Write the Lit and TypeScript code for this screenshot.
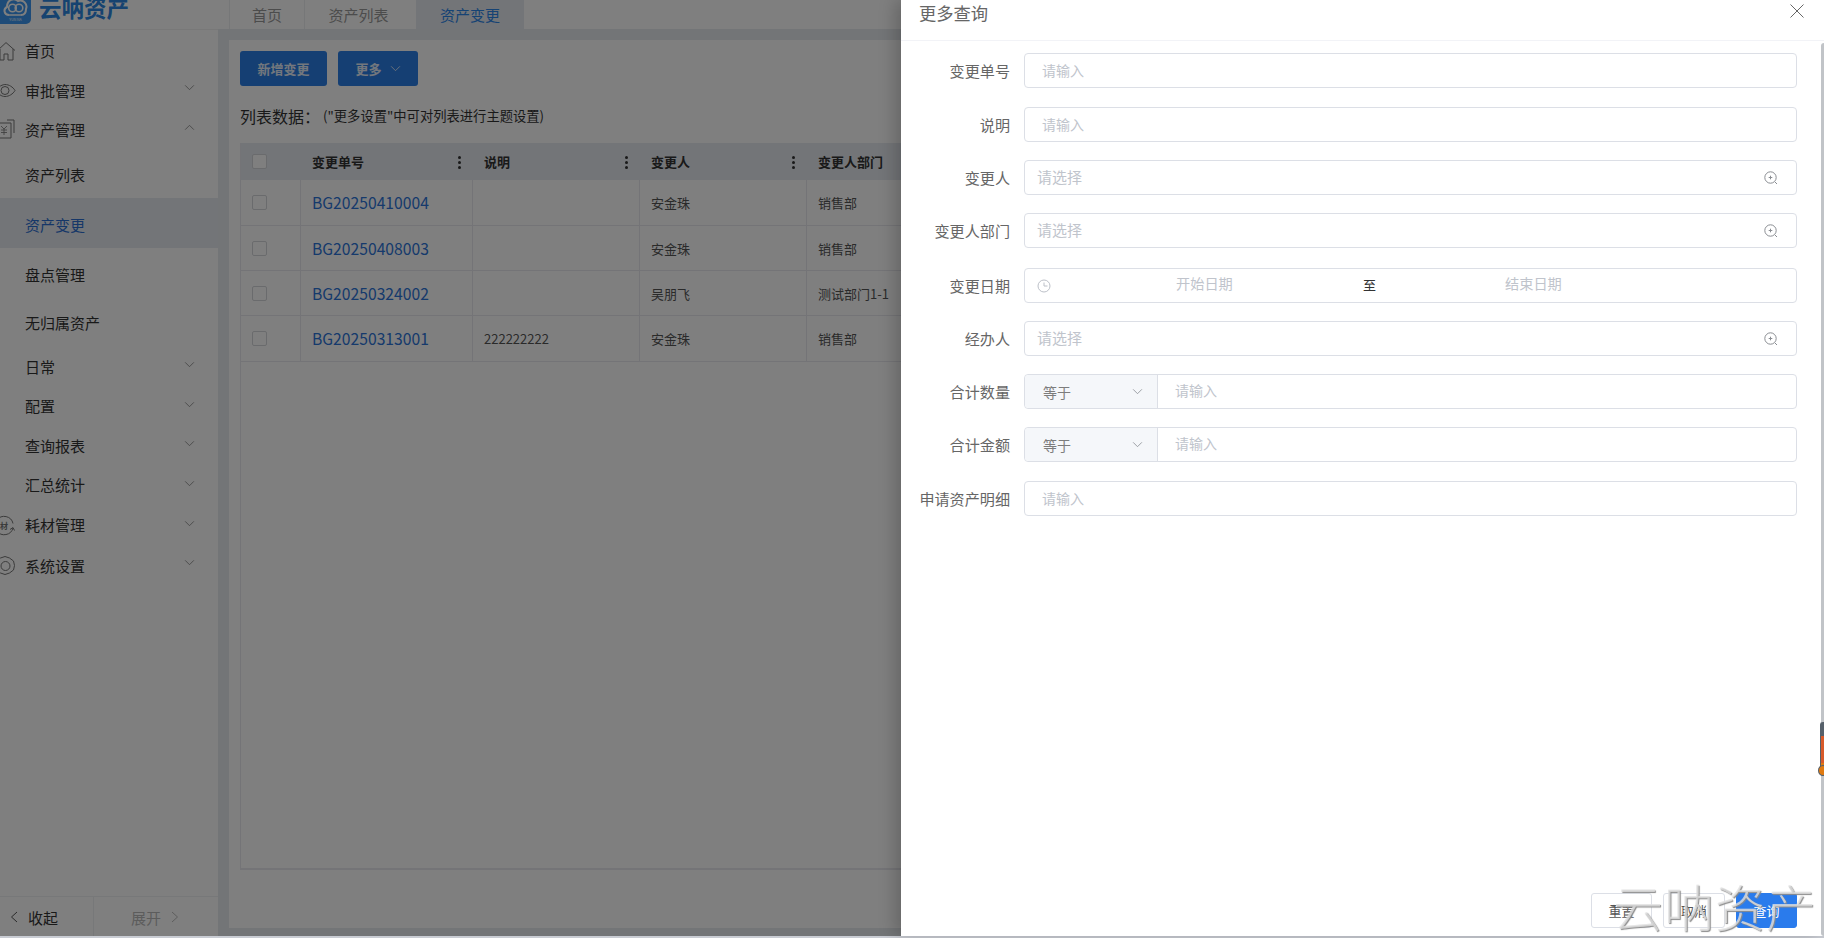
import { LitElement, html, css, svg } from "lit";
import { customElement } from "lit/decorators.js";

const chev = (up = false) => html`<svg class="chev" viewBox="0 0 12 8" width="11" height="7"><path d=${up ? "M1 6.5 6 1.5l5 5" : "M1 1.5l5 5 5-5"} fill="none" stroke="currentColor" stroke-width="1"/></svg>`;
const zoomIcon = html`<svg class="zi" viewBox="0 0 14 14" width="14" height="14"><circle cx="6.5" cy="6.5" r="5.7" fill="none" stroke="#8a8d92" stroke-width="1"/><path d="M4.7 6.5h3.600M6.500 4.700v3.600M11 11l2 2" fill="none" stroke="#8a8d92" stroke-width="1"/></svg>`;

const menuIcons: Record<string, unknown> = {
  home: svg`<path d="M-3 10 6 1.600l9 7.900M0 8v11h4v-6h4v6h5V8" fill="none" stroke="currentColor"/>`,
  eye: svg`<path d="M-5 9.500C-1 5 3 3.500 5 3.500c4 0 8 2.500 10 6-2 3.500-6 6-10 6-4 0-6-2.500-10-6Z" fill="none" stroke="currentColor"/><circle cx="5" cy="9.500" r="4" fill="none" stroke="currentColor"/>`,
  money: svg`<path d="M-4 2H11V17H-4M7-1H14V12" fill="none" stroke="currentColor"/><path d="M1 5l3 3 3-3M1 9h6M1 11.500h6M4 8v6" fill="none" stroke="currentColor" stroke-width=".8"/>`,
  gear: svg`<path d="M5 .5l4.500 1.500 4 3 1 4.500-1 4.500-4 3-4.500 1.500-4.500-1.500-4-3-1-4.500 1-4.500 4-3Z" fill="none" stroke="currentColor"/><circle cx="5.500" cy="10" r="4.500" fill="none" stroke="currentColor"/>`,
  mat: svg`<path d="M13 6.500A9 9 0 0 0-3 3M13 11A9 9 0 0 1-3 14" fill="none" stroke="currentColor"/><path d="M10 12.500l3-2 1.500 3" fill="none" stroke="currentColor"/><text x="0" y="11.500" font-size="8" font-weight="700" fill="currentColor">材</text>`,
};
const mi = (k: string) => html`<svg class="mi" viewBox="0 0 15 20" width="15" height="20">${menuIcons[k]}</svg>`;

const menu: { t: string; c: string; i?: string; ch?: "d" | "u" }[] = [
  { t: "首页", c: "h40 p2", i: "home" },
  { t: "审批管理", c: "h40 p2", i: "eye", ch: "d" },
  { t: "资产管理", c: "h39 p2", i: "money", ch: "u" },
  { t: "资产列表", c: "h48 top1" },
  { t: "资产变更", c: "h50 low on" },
  { t: "盘点管理", c: "h50 low" },
  { t: "无归属资产", c: "h50 p2" },
  { t: "日常", c: "h40 p4", ch: "d" },
  { t: "配置", c: "h39 p4", ch: "d" },
  { t: "查询报表", c: "h40 p4", ch: "d" },
  { t: "汇总统计", c: "h40 p6", ch: "d" },
  { t: "耗材管理", c: "h39 p4", i: "mat", ch: "d" },
  { t: "系统设置", c: "h40 p2", i: "gear", ch: "d" },
];

@customElement("side-menu")
class SideMenu extends LitElement {
  static styles = css`
    :host { display: flex; flex-direction: column; width: 218px; background: #fff; position: relative; font-family: "Noto Sans CJK SC", "Noto Sans", sans-serif; flex: none; }
    .logo { height: 30px; box-sizing: border-box; display: flex; align-items: flex-start; overflow: hidden; border-bottom: 1px solid #f0f0f0; flex: none; padding-bottom: 1px; }
    .logoBox { width: 31px; height: 24px; background: #3c96f0; border-radius: 0 0 5px 0; flex: none; }
    .logoBox svg { display: block; }
    .logoTxt { font-size: 22.500px; line-height: 24px; color: #2c86e0; margin: -5px 0 0 8px; font-weight: 700; height: 24px; }
    .items { display: flex; flex-direction: column; flex: 1; padding-top: 1px; }
    .it { display: flex; align-items: center; font-size: 15px; color: #333; padding-left: 25px; position: relative; box-sizing: border-box; }
    .h39 { height: 39px; } .h40 { height: 40px; } .h48 { height: 48px; } .h50 { height: 50px; }
    .low { padding-top: 3px; }
    .top1 { padding-top: 1px; }
    .p2 { padding-bottom: 2px; } .p4 { padding-bottom: 4px; } .p6 { padding-bottom: 6px; }
    .it .mi { position: absolute; left: 0; top: 10px; color: #777; overflow: visible; }
    .chev { position: absolute; left: 184px; top: 13px; color: #8a8a8a; }
    .on { background: #e7ebf1; color: #2c6fd0; }
    .foot { height: 40px; box-sizing: border-box; display: flex; border-top: 1px solid #eef0f2; font-size: 15px; color: #333; flex: none; }
    .foot div { width: 93px; display: flex; align-items: center; gap: 10px; padding: 1px 0 0 10px; box-sizing: border-box; height: 100%; }
    .foot .r { width: 125px; border-left: 1px solid #eef0f2; color: #b8b8b8; padding-left: 37px; gap: 10px; }
  `;
  render() {
    return html`
      <div class="logo"><div class="logoBox"><svg viewBox="0 0 31 24" width="31" height="24"><path d="M9 15C4 15 3 9 7 7 7 0 14-3 18 1c5-2 10 3 8 8 0 4-2 6-5 6" fill="none" stroke="#fff" stroke-width="2"/><circle cx="12.500" cy="8" r="3.800" fill="none" stroke="#fff" stroke-width="1.600"/><circle cx="19" cy="8" r="3.800" fill="none" stroke="#fff" stroke-width="1.600"/><path d="M9 15h12" stroke="#fff" stroke-width="1.500"/><text x="15.500" y="20.500" font-size="3.500" fill="#fff" text-anchor="middle">YUN NA</text></svg></div><div class="logoTxt">云呐资产</div></div>
      <div class="items">
        ${menu.map((m) => html`<div class="it ${m.c}">${m.i ? mi(m.i) : ""}${m.t}${m.ch ? chev(m.ch === "u") : ""}</div>`)}
      </div>
      <div class="foot"><div><svg viewBox="0 0 8 12" width="8" height="12"><path d="M7 1 1.500 6 7 11" fill="none" stroke="#555"/></svg>收起</div><div class="r">展开<svg viewBox="0 0 8 12" width="8" height="12"><path d="M1 1l5.500 5L1 11" fill="none" stroke="#bbb"/></svg></div></div>
    `;
  }
}

const rows = [
  ["BG20250410004", "", "安金珠", "销售部", "t"],
  ["BG20250408003", "", "安金珠", "销售部", ""],
  ["BG20250324002", "", "吴朋飞", "测试部门1-1", ""],
  ["BG20250313001", "222222222", "安金珠", "销售部", "t"],
];

@customElement("main-area")
class MainArea extends LitElement {
  static styles = css`
    :host { display: flex; flex-direction: column; flex: 1; min-width: 0; background: #e7eaef; font-family: "Noto Sans CJK SC", "Noto Sans", sans-serif; }
    .tabs { height: 29px; background: #fff; display: flex; flex: none; padding-left: 11px; }
    .tab { display: flex; align-items: center; justify-content: center; font-size: 15px; color: #999; border-left: 1px solid #eceef0; box-sizing: border-box; }
    .t1 { width: 75px; } .t2 { width: 112px; padding-right: 4px; } .t3 { width: 108px; }
    .tab.on { color: #2c86e8; background: #e7ebf1; border: 0; }
    .content { margin: 11px 11px 8px 11px; background: #fff; flex: 1; padding: 11px 11px 0; display: flex; flex-direction: column; min-height: 0; }
    .btns { display: flex; gap: 11px; flex: none; }
    .btn { height: 35px; background: #2a7ee6; border-radius: 3px; display: flex; align-items: center; justify-content: center; font-size: 13px; font-weight: 700; color: #e6effa; gap: 8px; }
    .b1 { width: 87px; } .b2 { width: 80px; }
    .title { margin-top: 17px; font-size: 16px; color: #333; height: 25px; display: flex; align-items: center; flex: none; }
    .title small { font-size: 13.300px; color: #333; margin-left: 3px; }
    .grid { margin-top: 15px; flex: 1; border: 1px solid #e8e9ee; border-top: 0; border-bottom-width: 2px; margin-bottom: 58px; }
    .grow { display: grid; grid-template-columns: 60px 172px 167px 167px 1fr; }
    .grow > div { display: flex; align-items: center; font-size: 13px; color: #555; padding-left: 11px; border-right: 1px solid #e8e9ee; border-bottom: 1px solid #e8e9ee; position: relative; height: 45px; box-sizing: border-box; }
    .grow.t > div { height: 46px; }
    .grow.head > div { background: #e7ebf1; font-weight: 700; color: #333; border: 0; height: 37px; }
    .cb { width: 13px; height: 13px; border: 1px solid #d4d6da; border-radius: 2px; background: #fff; }
    .dots { position: absolute; right: 12px; top: 13px; display: flex; flex-direction: column; gap: 2px; }
    .dots i { width: 3px; height: 3px; background: #333; border-radius: 50%; }
    .grow .link { color: #2c74d8; font-size: 15.700px; }
  `;
  render() {
    const dots = html`<span class="dots"><i></i><i></i><i></i></span>`;
    return html`
      <div class="tabs">
        <div class="tab t1">首页</div>
        <div class="tab t2">资产列表</div>
        <div class="tab t3 on">资产变更</div>
      </div>
      <div class="content">
        <div class="btns"><div class="btn b1">新增变更</div><div class="btn b2">更多${chev()}</div></div>
        <div class="title">列表数据：<small>("更多设置"中可对列表进行主题设置)</small></div>
        <div class="grid">
          <div class="grow head"><div><span class="cb"></span></div><div>变更单号${dots}</div><div>说明${dots}</div><div>变更人${dots}</div><div>变更人部门</div></div>
          ${rows.map((r) => html`<div class="grow ${r[4]}"><div><span class="cb"></span></div><div class="link">${r[0]}</div><div>${r[1]}</div><div>${r[2]}</div><div>${r[3]}</div></div>`)}
        </div>
      </div>
    `;
  }
}

@customElement("app-root")
export class AppRoot extends LitElement {
  static styles = css`
    :host { display: block; width: 1824px; height: 938px; position: relative; overflow: hidden; font-family: "Noto Sans CJK SC", "Noto Sans", sans-serif; background: #c9ccd3; }
    .page { display: flex; height: 936px; }
    .mask { position: absolute; inset: 0 0 2px 0; background: rgba(0,0,0,.5); }
    .drawer { position: absolute; left: 901px; top: 0; right: 0; bottom: 2px; background: #fff; display: flex; flex-direction: column; box-shadow: -6px 0 16px rgba(0,0,0,.2); }
    .dh { height: 41px; box-sizing: border-box; border-bottom: 1px solid #f2f3f7; padding-left: 18px; font-size: 17.300px; color: #666; line-height: 26px; flex: none; position: relative; }
    .close { position: absolute; left: 889px; top: 4px; }
    .form { flex: 1; display: flex; flex-direction: column; padding: 12px 27px 0 0; gap: 18px; }
    .fr { display: flex; align-items: center; height: 35px; flex: none; }
    .fr.m1 { margin-top: 1px; }
    .fr.m2 { margin-top: 2px; }
    .fl { width: 109px; text-align: right; font-size: 15.100px; color: #666; flex: none; margin-right: 14px; white-space: nowrap; padding-bottom: 2px; }
    .inp { flex: 1; height: 35px; box-sizing: border-box; border: 1px solid #dcdfe6; border-radius: 4px; display: flex; align-items: center; font-size: 14px; color: #c0c4cc; padding: 0 0 2px 17px; position: relative; }
    .inp.sel { padding-left: 12px; font-size: 15px; }
    .zi { position: absolute; right: 18px; top: 10px; }
    .inp.date { padding: 0 0 0 12px; font-size: 14.200px; }
    .d1 { position: absolute; left: 151px; top: 4px; }
    .d2 { position: absolute; left: 338px; top: 6px; color: #333; font-size: 13px; }
    .d3 { position: absolute; left: 480px; top: 4px; }
    .inp.pre { padding: 0 0 0 0; }
    .inp.pre > span { padding-bottom: 3px; }
    .preS { width: 133px; height: 33px; background: #f5f7fa; border-right: 1px solid #dcdfe6; border-radius: 4px 0 0 4px; box-sizing: border-box; display: flex; align-items: center; padding: 0 0 0 18px; color: #7d7d7d; position: relative; flex: none; margin-right: 17px; font-size: 14px; }
    .preS .chev { position: absolute; left: 107px; top: 13px; color: #909399; }
    .ft { display: flex; justify-content: flex-end; gap: 11px; padding: 0 27px 8px 0; flex: none; }
    .b { width: 61px; height: 35px; box-sizing: border-box; border: 1px solid #dcdfe6; border-radius: 3px; color: #555; font-size: 13px; display: flex; align-items: center; justify-content: center; background: #fff; }
    .b.w { width: 62px; }
    .b.p { background: #2a7bec; border-color: #2a7bec; color: #fff; }
    .sb { position: absolute; right: 0; top: 43px; bottom: 2px; width: 3px; background: #c1c4c8; border-radius: 3px 0 0 3px; }
    .peek { position: absolute; right: 0; top: 722px; width: 4px; height: 52px; background: linear-gradient(#56606a 0 13px, #d85a2a 13px 40px, #e07a10 40px); border-radius: 3px 0 0 0; border: 1px solid #56606a; border-right: 0; box-sizing: border-box; }
    .peek::after { content: ""; position: absolute; left: -3px; bottom: -3px; width: 10px; height: 11px; border-radius: 50%; background: #e07a10; border: 1px solid #56606a; box-sizing: border-box; }
    .wm { position: absolute; left: 1613px; top: 875px; font-size: 50px; letter-spacing: 1px; line-height: 60px; color: rgba(225,225,225,.78); font-family: "Noto Sans CJK SC", sans-serif; font-weight: 300; text-shadow: 1px 1px 1px #8c8c8c; pointer-events: none; white-space: nowrap; }
  `;
  private f(label: string, body: unknown, cls = "") {
    return html`<div class="fr ${cls}"><div class="fl">${label}</div>${body}</div>`;
  }
  render() {
    const inp = html`<div class="inp">请输入</div>`;
    const sel = html`<div class="inp sel">请选择${zoomIcon}</div>`;
    const pre = html`<div class="inp pre"><div class="preS">等于${chev()}</div><span>请输入</span></div>`;
    return html`
      <div class="page"><side-menu></side-menu><main-area></main-area></div>
      <div class="mask"></div>
      <div class="drawer">
        <div class="dh">更多查询<svg class="close" viewBox="0 0 14 14" width="14" height="14"><path d="M.5.5l13 13M13.500.5l-13 13" stroke="#666" fill="none"/></svg></div>
        <div class="form">
          ${this.f("变更单号", inp)}
          ${this.f("说明", inp, "m1")}
          ${this.f("变更人", sel)}
          ${this.f("变更人部门", sel)}
          ${this.f("变更日期", html`<div class="inp date"><svg viewBox="0 0 14 14" width="14" height="14"><circle cx="7" cy="7" r="6" fill="none" stroke="#bcc0c8"/><path d="M7 3.500V7h3.500" fill="none" stroke="#bcc0c8"/></svg><span class="d1">开始日期</span><span class="d2">至</span><span class="d3">结束日期</span></div>`, "m2")}
          ${this.f("经办人", sel)}
          ${this.f("合计数量", pre)}
          ${this.f("合计金额", pre)}
          ${this.f("申请资产明细", inp, "m1")}
        </div>
        <div class="ft"><div class="b">重置</div><div class="b w">取消</div><div class="b p">查询</div></div>
      </div>
      <div class="sb"></div>
      <div class="peek"></div>
      <div class="wm">云呐资产</div>
    `;
  }
}
